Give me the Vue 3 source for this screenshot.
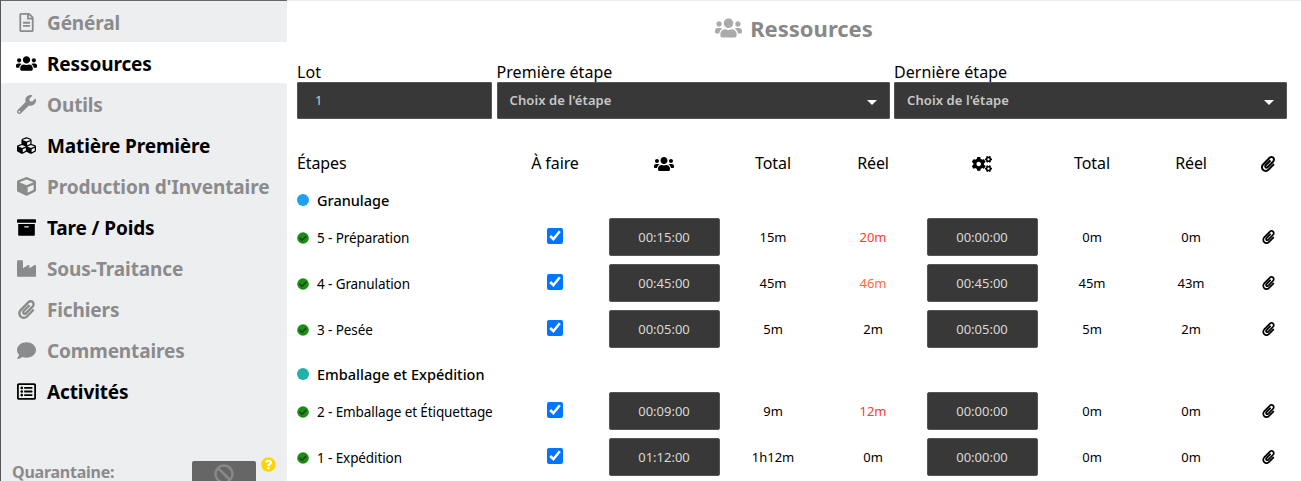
<script setup>
const P = {
  users: ['0 0 640 512', 'M96 224c35.3 0 64-28.7 64-64s-28.7-64-64-64-64 28.7-64 64 28.7 64 64 64zm448 0c35.3 0 64-28.7 64-64s-28.7-64-64-64-64 28.7-64 64 28.7 64 64 64zm32 32h-64c-17.6 0-33.5 7.1-45.1 18.6 40.3 22.1 68.9 62 75.1 109.4h66c17.7 0 32-14.3 32-32v-32c0-35.3-28.7-64-64-64zm-256 0c61.9 0 112-50.1 112-112S381.9 32 320 32 208 82.1 208 144s50.1 112 112 112zm76.8 32h-8.3c-20.8 10-43.9 16-68.5 16s-47.6-6-68.5-16h-8.3C179.6 288 128 339.6 128 403.2V432c0 26.5 21.5 48 48 48h288c26.5 0 48-21.5 48-48v-28.8c0-63.6-51.6-115.2-115.2-115.2zm-223.7-13.4C161.5 263.1 145.6 256 128 256H64c-35.3 0-64 28.7-64 64v32c0 17.7 14.3 32 32 32h65.9c6.3-47.4 34.9-87.3 75.2-109.4z'],
  wrench: ['0 0 512 512', 'M507.73 109.1c-2.24-9.03-13.54-12.09-20.12-5.51l-74.36 74.36-67.88-11.31-11.31-67.88 74.36-74.36c6.62-6.62 3.43-17.9-5.66-20.16-47.38-11.74-99.55.91-136.58 37.93-39.64 39.64-50.55 97.1-34.05 147.2L18.74 402.76c-24.99 24.99-24.99 65.51 0 90.5 24.99 24.99 65.51 24.99 90.5 0l213.21-213.21c50.12 16.71 107.47 5.68 147.37-34.22 37.07-37.07 49.7-89.32 37.91-136.73zM64 472c-13.25 0-24-10.75-24-24 0-13.26 10.75-24 24-24s24 10.74 24 24c0 13.25-10.75 24-24 24z'],
  clip: ['0 0 448 512', 'M43.246 466.142c-58.43-60.289-57.341-157.511 1.386-217.581L254.392 34c44.316-45.332 116.351-45.336 160.671 0 43.89 44.894 43.943 117.329 0 162.276L232.214 383.128c-29.855 30.537-78.633 30.111-107.982-.998-28.275-29.97-27.368-77.473 1.452-106.953l143.743-146.835c6.182-6.314 16.312-6.422 22.626-.241l22.861 22.379c6.315 6.182 6.422 16.312.241 22.626L171.427 319.927c-4.932 5.045-5.236 13.428-.648 18.292 4.372 4.634 11.245 4.711 15.688.165l182.849-186.851c19.613-20.062 19.613-52.725-.011-72.798-19.189-19.627-49.957-19.637-69.154 0L90.39 293.295c-34.763 35.56-35.299 93.12-1.191 128.313 34.01 35.093 88.985 35.137 123.058.286l172.06-175.999c6.177-6.319 16.307-6.433 22.626-.256l22.877 22.364c6.319 6.177 6.434 16.307.256 22.626l-172.06 175.998c-59.576 60.938-155.943 60.216-214.77-.485z'],
  cubes: ['0 0 512 512', 'M488.6 250.2L392 214V105.5c0-15-9.3-28.4-23.4-33.7l-100-37.5c-8.1-3.1-17.1-3.1-25.3 0l-100 37.5c-14.1 5.3-23.4 18.7-23.4 33.7V214l-96.6 36.2C9.3 255.5 0 268.9 0 283.9V394c0 13.6 7.7 26.1 19.9 32.2l100 50c10.1 5.1 22.1 5.1 32.2 0l103.9-52 103.9 52c10.1 5.1 22.1 5.1 32.2 0l100-50c12.2-6.1 19.9-18.6 19.9-32.2V283.9c0-15-9.3-28.4-23.4-33.7zM358 214.8l-85 31.9v-68.2l85-37v73.3zM154 104.1l102-38.2 102 38.2v.6l-102 41.4-102-41.4v-.6zm84 291.1l-85 42.5v-79.1l85-38.8v75.4zm0-112l-102 41.4-102-41.4v-.6l102-38.2 102 38.2v.6zm240 112l-85 42.5v-79.1l85-38.8v75.4zm0-112l-102 41.4-102-41.4v-.6l102-38.2 102 38.2v.6z'],
  cube: ['0 0 512 512', 'M239.1 6.3l-208 78c-18.7 7-31.1 25-31.1 45v225.1c0 18.2 10.3 34.8 26.5 42.9l208 104c13.5 6.8 29.4 6.8 42.9 0l208-104c16.3-8.1 26.5-24.8 26.5-42.9V129.3c0-20-12.4-37.9-31.1-44.9l-208-78C262 2.2 250 2.2 239.1 6.3zM256 68.4l192 72v1.1l-192 78-192-78v-1.1l192-72zm32 356V275.5l160-65v133.9l-160 80z'],
  archive: ['0 0 512 512', 'M32 448c0 17.7 14.3 32 32 32h384c17.7 0 32-14.3 32-32V160H32v288zm160-212c0-6.6 5.4-12 12-12h104c6.6 0 12 5.4 12 12v8c0 6.6-5.4 12-12 12H204c-6.6 0-12-5.4-12-12v-8zM480 32H32C14.3 32 0 46.3 0 64v48c0 8.8 7.2 16 16 16h480c8.8 0 16-7.2 16-16V64c0-17.7-14.3-32-32-32z'],
  industry: ['0 0 512 512', 'M475.115 163.781L336 252.309v-68.28c0-18.916-20.931-30.399-36.885-20.248L160 252.309V56c0-13.255-10.745-24-24-24H24C10.745 32 0 42.745 0 56v400c0 13.255 10.745 24 24 24h464c13.255 0 24-10.745 24-24V184.029c0-18.917-20.931-30.399-36.885-20.248z'],
  comment: ['0 0 512 512', 'M256 32C114.6 32 0 125.1 0 240c0 49.6 21.4 95 57 130.7C44.5 421.1 2.7 466 2.2 466.5c-2.2 2.3-2.8 5.7-1.5 8.7S4.8 480 8 480c66.3 0 116-31.8 140.6-51.4 32.7 12.3 69 19.4 107.4 19.4 141.4 0 256-93.1 256-208S397.4 32 256 32z'],
  list: ['0 0 512 512', 'M464 32H48C21.49 32 0 53.49 0 80v352c0 26.51 21.49 48 48 48h416c26.51 0 48-21.49 48-48V80c0-26.51-21.49-48-48-48zm-6 400H54a6 6 0 0 1-6-6V86a6 6 0 0 1 6-6h404a6 6 0 0 1 6 6v340a6 6 0 0 1-6 6zm-42-92v24c0 6.627-5.373 12-12 12H204c-6.627 0-12-5.373-12-12v-24c0-6.627 5.373-12 12-12h200c6.627 0 12 5.373 12 12zm0-96v24c0 6.627-5.373 12-12 12H204c-6.627 0-12-5.373-12-12v-24c0-6.627 5.373-12 12-12h200c6.627 0 12 5.373 12 12zm0-96v24c0 6.627-5.373 12-12 12H204c-6.627 0-12-5.373-12-12v-24c0-6.627 5.373-12 12-12h200c6.627 0 12 5.373 12 12zm-252 12c0 19.882-16.118 36-36 36s-36-16.118-36-36 16.118-36 36-36 36 16.118 36 36zm0 96c0 19.882-16.118 36-36 36s-36-16.118-36-36 16.118-36 36-36 36 16.118 36 36zm0 96c0 19.882-16.118 36-36 36s-36-16.118-36-36 16.118-36 36-36 36 16.118 36 36z'],
  file: ['0 0 384 512', 'M288 248v28c0 6.6-5.4 12-12 12H108c-6.6 0-12-5.4-12-12v-28c0-6.6 5.4-12 12-12h168c6.6 0 12 5.4 12 12zm-12 72H108c-6.6 0-12 5.4-12 12v28c0 6.6 5.4 12 12 12h168c6.6 0 12-5.4 12-12v-28c0-6.6-5.4-12-12-12zm108-188.1V464c0 26.5-21.5 48-48 48H48c-26.5 0-48-21.5-48-48V48C0 21.5 21.5 0 48 0h204.1C264.8 0 277 5.1 286 14.1L369.9 98c9 8.9 14.1 21.2 14.1 33.9zm-128-80V128h76.1L256 51.9zM336 464V176H232c-13.3 0-24-10.7-24-24V48H48v416h288z'],
  cogs: ['0 0 640 512', 'M512.1 191l-8.2 14.3c-3 5.3-9.4 7.5-15.1 5.4-11.8-4.4-22.6-10.7-32.1-18.6-4.6-3.8-5.8-10.5-2.8-15.7l8.2-14.3c-6.9-8-12.3-17.3-15.9-27.4h-16.5c-6 0-11.2-4.3-12.2-10.3-2-12-2.1-24.6 0-37.1 1-6 6.2-10.4 12.2-10.4h16.5c3.6-10.1 9-19.4 15.9-27.4l-8.2-14.3c-3-5.2-1.9-11.9 2.8-15.7 9.5-7.9 20.4-14.2 32.1-18.6 5.7-2.1 12.1.1 15.1 5.4l8.2 14.3c10.5-1.9 21.2-1.9 31.7 0L552 6.3c3-5.3 9.4-7.5 15.1-5.4 11.8 4.4 22.6 10.7 32.1 18.6 4.6 3.8 5.8 10.5 2.8 15.7l-8.2 14.3c6.9 8 12.3 17.3 15.9 27.4h16.5c6 0 11.2 4.3 12.2 10.3 2 12 2.1 24.6 0 37.1-1 6-6.2 10.4-12.2 10.4h-16.5c-3.6 10.1-9 19.4-15.9 27.4l8.2 14.3c3 5.2 1.9 11.9-2.8 15.7-9.5 7.9-20.4 14.2-32.1 18.6-5.7 2.1-12.1-.1-15.1-5.4l-8.2-14.3c-10.4 1.9-21.2 1.9-31.7 0zm-10.5-58.8c38.5 29.6 82.4-14.3 52.8-52.8-38.5-29.7-82.4 14.3-52.8 52.8zM386.3 286.1l33.7 16.8c10.1 5.8 14.5 18.1 10.5 29.1-8.9 24.2-26.4 46.4-42.6 65.8-7.4 8.9-20.2 11.1-30.3 5.3l-29.1-16.8c-16 13.7-34.6 24.6-54.9 31.7v33.6c0 11.6-8.3 21.6-19.7 23.6-24.6 4.2-50.4 4.4-75.9 0-11.5-2-20-11.9-20-23.6V418c-20.3-7.2-38.9-18-54.9-31.7L74 403c-10 5.8-22.9 3.6-30.3-5.3-16.2-19.4-33.3-41.6-42.2-65.7-4-10.9.4-23.2 10.5-29.1l33.3-16.8c-3.9-20.9-3.9-42.4 0-63.4L12 205.8c-10.1-5.8-14.6-18.1-10.5-29 8.9-24.2 26-46.4 42.2-65.8 7.4-8.9 20.2-11.1 30.3-5.3l29.1 16.8c16-13.7 34.6-24.6 54.9-31.7V57.1c0-11.5 8.2-21.5 19.6-23.5 24.6-4.2 50.5-4.4 76-.1 11.5 2 20 11.9 20 23.6v33.6c20.3 7.2 38.9 18 54.9 31.7l29.1-16.8c10-5.8 22.9-3.6 30.3 5.3 16.2 19.4 33.2 41.6 42.1 65.8 4 10.9.1 23.2-10 29.1l-33.7 16.8c3.9 21 3.9 42.5 0 63.5zm-117.6 21.1c59.2-77-28.7-164.9-105.7-105.7-59.2 77 28.7 164.9 105.7 105.7zm243.4 182.7l-8.2 14.3c-3 5.3-9.4 7.5-15.1 5.4-11.8-4.4-22.6-10.7-32.1-18.6-4.6-3.8-5.8-10.5-2.8-15.7l8.2-14.3c-6.9-8-12.3-17.3-15.9-27.4h-16.5c-6 0-11.2-4.3-12.2-10.3-2-12-2.1-24.6 0-37.1 1-6 6.2-10.4 12.2-10.4h16.5c3.6-10.1 9-19.4 15.9-27.4l-8.2-14.3c-3-5.2-1.9-11.9 2.8-15.7 9.5-7.9 20.4-14.2 32.1-18.6 5.7-2.1 12.1.1 15.1 5.4l8.2 14.3c10.5-1.9 21.2-1.9 31.7 0l8.2-14.3c3-5.3 9.4-7.5 15.1-5.4 11.8 4.4 22.6 10.7 32.1 18.6 4.6 3.8 5.8 10.5 2.8 15.7l-8.2 14.3c6.9 8 12.3 17.3 15.9 27.4h16.5c6 0 11.2 4.3 12.2 10.3 2 12 2.1 24.6 0 37.1-1 6-6.2 10.4-12.2 10.4h-16.5c-3.6 10.1-9 19.4-15.9 27.4l8.2 14.3c3 5.2 1.9 11.9-2.8 15.7-9.5 7.9-20.4 14.2-32.1 18.6-5.7 2.1-12.1-.1-15.1-5.4l-8.2-14.3c-10.4 1.9-21.2 1.9-31.7 0zM501.6 431c38.5 29.6 82.4-14.3 52.8-52.8-38.5-29.6-82.4 14.3-52.8 52.8z'],
  ban: ['0 0 512 512', 'M256 8C119.034 8 8 119.033 8 256s111.034 248 248 248 248-111.034 248-248S392.967 8 256 8zm130.108 117.892c65.448 65.448 70 165.481 20.677 235.637L150.47 105.216c70.204-49.356 170.226-44.735 235.638 20.676zM125.892 386.108c-65.448-65.448-70-165.481-20.677-235.637L361.53 406.784c-70.203 49.356-170.226 44.736-235.638-20.676z'],
  question: ['0 0 512 512', 'M504 256c0 136.997-111.043 248-248 248S8 392.997 8 256C8 119.083 119.043 8 256 8s248 111.083 248 248zM262.655 90c-54.497 0-89.255 22.957-116.549 63.758-3.536 5.286-2.353 12.415 2.715 16.258l34.699 26.31c5.205 3.947 12.621 3.008 16.665-2.122 17.864-22.658 30.113-35.797 57.303-35.797 20.429 0 45.698 13.148 45.698 32.958 0 14.976-12.363 22.667-32.534 33.976C247.128 238.528 216 254.941 216 296v4c0 6.627 5.373 12 12 12h56c6.627 0 12-5.373 12-12v-1.333c0-28.462 83.186-29.647 83.186-106.667 0-58.002-60.165-102-116.531-102zM256 338c-25.365 0-46 20.635-46 46 0 25.364 20.635 46 46 46s46-20.636 46-46c0-25.365-20.635-46-46-46z']
}

const nav = [
  { label: 'Général', icon: 'file', on: false },
  { label: 'Ressources', icon: 'users', on: true, active: true },
  { label: 'Outils', icon: 'wrench', on: false },
  { label: 'Matière Première', icon: 'cubes', on: true },
  { label: "Production d'Inventaire", icon: 'cube', on: false },
  { label: 'Tare / Poids', icon: 'archive', on: true },
  { label: 'Sous-Traitance', icon: 'industry', on: false },
  { label: 'Fichiers', icon: 'clip', on: false },
  { label: 'Commentaires', icon: 'comment', on: false },
  { label: 'Activités', icon: 'list', on: true }
]

const groups = [
  {
    name: 'Granulage', color: '#1fa2ee',
    rows: [
      { name: '5 - Préparation', t1: '00:15:00', total1: '15m', real1: '20m', hot: 'red', t2: '00:00:00', total2: '0m', real2: '0m' },
      { name: '4 - Granulation', t1: '00:45:00', total1: '45m', real1: '46m', hot: 'soft', t2: '00:45:00', total2: '45m', real2: '43m' },
      { name: '3 - Pesée', t1: '00:05:00', total1: '5m', real1: '2m', t2: '00:05:00', total2: '5m', real2: '2m' }
    ]
  },
  {
    name: 'Emballage et Expédition', color: '#20b2aa',
    rows: [
      { name: '2 - Emballage et Étiquettage', t1: '00:09:00', total1: '9m', real1: '12m', hot: 'red', t2: '00:00:00', total2: '0m', real2: '0m' },
      { name: '1 - Expédition', t1: '01:12:00', total1: '1h12m', real1: '0m', t2: '00:00:00', total2: '0m', real2: '0m' }
    ]
  }
]
</script>

<template>
  <div class="page">
    <aside class="side">
      <a v-for="n in nav" :key="n.label" class="item" :class="{ on: n.on, active: n.active }">
        <span class="ico"><svg :viewBox="P[n.icon][0]" class="navsvg"><path :d="P[n.icon][1]" fill="currentColor" /></svg></span>
        <span>{{ n.label }}</span>
      </a>
      <div class="quar">
        <span class="qlabel">Quarantaine:</span>
        <button class="qbtn"><svg :viewBox="P.ban[0]" class="qban"><path :d="P.ban[1]" fill="#888" /></svg></button>
        <svg :viewBox="P.question[0]" class="qhelp"><circle cx="256" cy="256" r="170" fill="#fff" /><path :d="P.question[1]" fill="#ffd500" /></svg>
      </div>
    </aside>

    <main class="main">
      <h1 class="title">
        <svg :viewBox="P.users[0]" class="ticon"><path :d="P.users[1]" fill="#aaa" /></svg>
        <span>Ressources</span>
      </h1>

      <div class="filters">
        <label class="field">
          <span class="flabel">Lot</span>
          <input class="lot" value="1" readonly />
        </label>
        <label class="field sel">
          <span class="flabel">Première étape</span>
          <span class="selbox">Choix de l'étape<i class="caret"></i></span>
        </label>
        <label class="field sel">
          <span class="flabel">Dernière étape</span>
          <span class="selbox">Choix de l'étape<i class="caret"></i></span>
        </label>
      </div>

      <div class="grid head">
        <div class="left">Étapes</div>
        <div>À faire</div>
        <div><svg :viewBox="P.users[0]" class="hicon"><path :d="P.users[1]" /></svg></div>
        <div>Total</div>
        <div>Réel</div>
        <div><svg :viewBox="P.cogs[0]" class="hicon"><path :d="P.cogs[1]" /></svg></div>
        <div>Total</div>
        <div>Réel</div>
        <div><svg :viewBox="P.clip[0]" class="hclip"><path :d="P.clip[1]" /></svg></div>
      </div>

      <section v-for="g in groups" :key="g.name">
        <div class="group">
          <i class="gdot" :style="{ background: g.color }"></i>{{ g.name }}
        </div>
        <div v-for="r in g.rows" :key="r.name" class="grid row">
          <div class="left name">
            <svg viewBox="0 0 512 512" class="ok">
              <circle cx="256" cy="256" r="248" fill="#17900f" />
              <path d="M227.314 387.314l184-184c6.248-6.248 6.248-16.379 0-22.627l-22.627-22.627c-6.248-6.249-16.379-6.249-22.628 0L216 308.118l-70.059-70.059c-6.248-6.248-16.379-6.248-22.628 0l-22.627 22.627c-6.248 6.248-6.248 16.379 0 22.627l104 104c6.249 6.25 16.379 6.25 22.628.001z" fill="#333" />
            </svg>
            {{ r.name }}
          </div>
          <div><input type="checkbox" class="chk" checked /></div>
          <div><input class="time" :value="r.t1" readonly /></div>
          <div>{{ r.total1 }}</div>
          <div :class="r.hot">{{ r.real1 }}</div>
          <div><input class="time" :value="r.t2" readonly /></div>
          <div>{{ r.total2 }}</div>
          <div>{{ r.real2 }}</div>
          <div><svg :viewBox="P.clip[0]" class="rclip"><path :d="P.clip[1]" /></svg></div>
        </div>
      </section>
    </main>
  </div>
</template>

<style>
html, body { margin: 0; height: 481px; overflow: hidden; background: #fff; }
</style>

<style scoped>
.page {
  display: flex;
  height: 481px;
  overflow: hidden;
  font-family: "Noto Sans", "Open Sans", sans-serif;
  color: #000;
}
.side {
  width: 287px;
  flex: none;
  box-sizing: border-box;
  height: 481px;
  background: #edeef0;
  border-left: 1px solid #555;
  border-top: 1px solid #666;
  padding-top: 0;
  display: flex;
  flex-direction: column;
  position: relative;
}
.item {
  display: flex;
  align-items: center;
  height: 41px;
  box-sizing: border-box;
  padding-top: 2px;
  font-size: 19px;
  font-weight: 700;
  color: #8b8b8b;
  letter-spacing: -0.12px;
}
.item.on { color: #000; }
.item.active { background: #fff; }
.ico { width: 46px; display: flex; justify-content: center; flex: none; padding-left: 5px; box-sizing: border-box; }
.navsvg { height: 19px; width: 21px; }
.quar {
  margin-top: auto;
  height: 21px;
  display: flex;
  align-items: flex-start;
  overflow: visible;
  padding-left: 11px;
  position: relative;
  font-size: 16px;
  font-weight: 700;
  color: #8b8b8b;
}
.qlabel { margin-top: 4px; letter-spacing: -0.25px; line-height: 16px; }
.qbtn {
  position: absolute;
  left: 191px;
  top: 1px;
  width: 64px;
  height: 26px;
  background: #666;
  border: 0;
  border-radius: 2px;
  padding: 2px 0 0;
  display: block;
  text-align: center;
}
.qban { width: 20px; height: 20px; display: inline-block; }
.qhelp { position: absolute; left: 260px; top: -3px; width: 15px; height: 15px; }

.main { flex: 1; min-width: 0; border-top: 1px solid #eee; padding: 0 14px 0 10px; box-sizing: border-box; }
.title {
  margin: 0;
  height: 56px;
  display: flex;
  align-items: center;
  justify-content: center;
  gap: 8px;
  font-size: 22px;
  font-weight: 700;
  color: #888;
  padding: 0 0 2px 4px;
  box-sizing: border-box;
}
.ticon { width: 27px; height: 22px; }
.filters { display: grid; grid-template-columns: 195px 393px 393px; column-gap: 4.5px; }
.field { display: flex; flex-direction: column; min-width: 0; }
.flabel { height: 25px; font-size: 16px; line-height: 30px; white-space: nowrap; letter-spacing: 0.05px; }
.lot {
  box-sizing: border-box;
  height: 37px;
  width: 100%;
  background: #383838;
  border: 1px solid #555;
  border-radius: 1px;
  color: #ccc;
  font: 400 13px "Noto Sans", sans-serif;
  padding: 0 0 2px 17px;
  outline: none;
}
.selbox {
  box-sizing: border-box;
  height: 37px;
  background: #383838;
  border: 1px solid #555;
  border-radius: 1px;
  color: #c8c8c8;
  font-size: 13px;
  font-weight: 600;
  letter-spacing: 0.1px;
  display: flex;
  align-items: center;
  padding: 0 0 2px 12px;
  position: relative;
}
.caret {
  position: absolute;
  right: 12px;
  top: 17px;
  border-left: 5.5px solid transparent;
  border-right: 5.5px solid transparent;
  border-top: 5.5px solid #fff;
}
.grid {
  display: grid;
  grid-template-columns: 208px 100px 118px 100px 100px 118px 102px 96px 58px;
  align-items: center;
  justify-items: center;
}
.left { justify-self: start; }
.head {
  margin-top: 26px;
  height: 37px;
  font-size: 16px;
  line-height: 37px;
  letter-spacing: -0.1px;
}
.head > div { height: 37px; display: flex; align-items: center; }
.hicon { width: 20px; height: 16px; }
.hclip { width: 14px; height: 16px; }
.group {
  height: 36px;
  display: flex;
  align-items: center;
  font-size: 14.5px;
  font-weight: 500;
  letter-spacing: 0;
}
.gdot { width: 12px; height: 12px; border-radius: 50%; margin-right: 8px; flex: none; }
.row { height: 38px; margin-bottom: 8px; font-size: 13px; }
.row > div:not(.name) { padding-top: 0; }
.name { display: flex; align-items: center; font-size: 13.5px; letter-spacing: -0.1px; white-space: nowrap; padding-top: 1px; }
.ok { width: 12px; height: 12px; margin-right: 8px; flex: none; }
.chk { width: 16px; height: 16px; margin: 0 0 2px; display: block; accent-color: #0075ff; }
.time {
  display: block;
  box-sizing: border-box;
  width: 111px;
  height: 38px;
  background: #383838;
  border: 1px solid #555;
  border-radius: 2px;
  color: #d8d8d8;
  text-align: center;
  font: 400 13px "Noto Sans", sans-serif;
  padding: 0;
  outline: none;
}
.red { color: #ff3b30; }
.soft { color: #ff6a45; }
.rclip { display: block; width: 13px; height: 14px; }
</style>
